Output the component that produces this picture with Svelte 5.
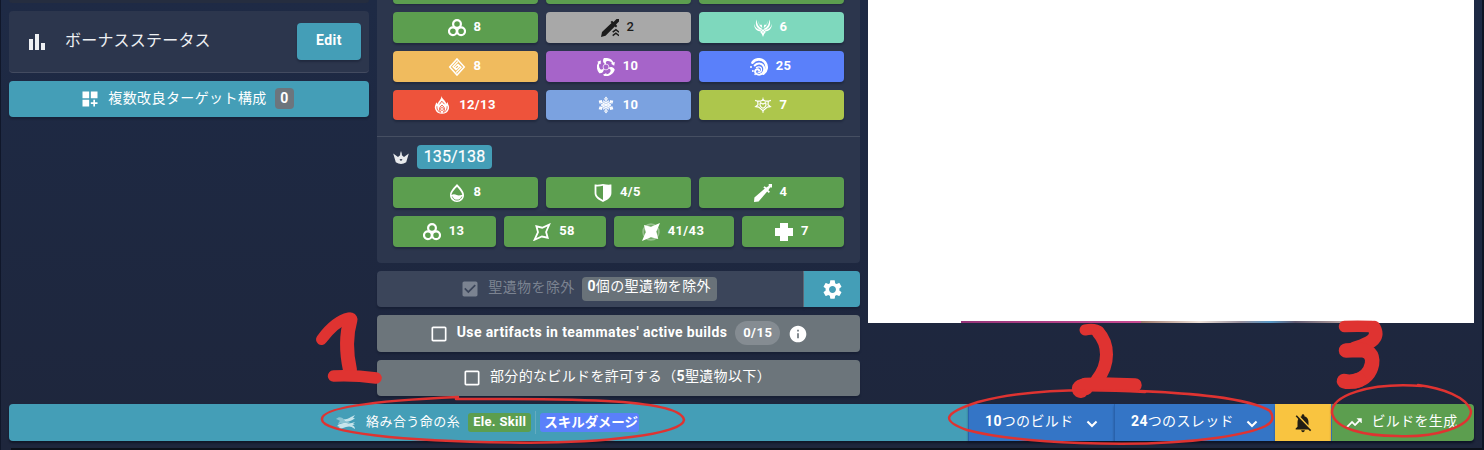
<script>
  const elements = [
    { icon: 'em', label: '8', color: '#5c9e4f' },
    { icon: 'heavy', label: '2', color: '#a8a8a8', dark: true },
    { icon: 'anemo', label: '6', color: '#7ed8bd' },
    { icon: 'geo', label: '8', color: '#f0bb5e' },
    { icon: 'electro', label: '10', color: '#a664c9' },
    { icon: 'hydro', label: '25', color: '#5a80fa' },
    { icon: 'pyro', label: '12/13', color: '#ee533b' },
    { icon: 'cryo', label: '10', color: '#7ba2e0' },
    { icon: 'dendro', label: '7', color: '#adc64c' }
  ];
  const crownTop = [
    { icon: 'hp', label: '8' },
    { icon: 'def', label: '4/5' },
    { icon: 'atk', label: '4' }
  ];
  const crownBottom = [
    { icon: 'em', label: '13' },
    { icon: 'rate', label: '58' },
    { icon: 'dmg', label: '41/43' },
    { icon: 'heal', label: '7' }
  ];
</script>

{#snippet glyph(name)}
  <svg class="glyph" viewBox="0 0 18 18" fill="currentColor">
    {#if name === 'em'}
      <g fill="none" stroke="currentColor" stroke-width="2.2">
        <circle cx="9" cy="5" r="3.9" /><circle cx="4.9" cy="12.2" r="3.9" /><circle cx="13.1" cy="12.2" r="3.9" />
      </g>
    {:else if name === 'heavy'}
      <path d="M0 18 1 13 10.5 4 9.5 3 11 1.8 12.5 3 15.5 0 18 0 18 2.5 15 5.5 16.2 7 15 8.4 13.8 7.4 4.5 16.8Z" />
      <path d="m11.7 13.2 3.2-2.5 3.2 2.5M11.7 16.7l3.2-2.5 3.2 2.5" fill="none" stroke="currentColor" stroke-width="1.5" />
    {:else if name === 'atk'}
      <path d="M0 18 .4 13.400 10.800 4.600 9.300 3.400 10.600 2.200 12.300 3.500 14.700 2 14.700 0H18V3.400L16.100 3.600 14.400 6.200 16 7.700 14.700 8.900 13.200 7.500 4.600 17.400Z" />
    {:else if name === 'anemo'}
      <path d="M2.600.5C.9 4.600 2 9.200 7.600 11.200L8 9.700C4.500 8 2.700 5 2.600.5ZM4.300 1.500C4.500 5.400 6 7.900 8.300 8.900L7.800 5.800 5.500 5.700ZM0 4.800c.1 4.900 2.800 7.600 7.200 7.800L6.700 11C3.200 10.200.9 8.600 0 4.800ZM15.400.5c1.700 4.100.6 8.700-5 10.700L10 9.700C13.500 8 15.300 5 15.400.5ZM13.700 1.500C13.500 5.400 12 7.900 9.700 8.900l.5-3.100 2.300-.1ZM18 4.800c-.1 4.900-2.800 7.600-7.200 7.800l.5-1.600C14.800 10.200 17.100 8.600 18 4.800Z" />
      <path d="m9 10 2.800 3-1.600 2L9 18l-1.200-3-1.600-2Z" /><circle cx="9" cy="12.9" r=".6" fill="#7ed8bd" />
    {:else if name === 'geo'}
      <g fill="none" stroke="currentColor">
        <path stroke-width="1.5" d="M9 .9 16.300 9 9 17.100 1.700 9Z" />
        <path stroke-width="1.3" d="M9.800 3.500 4.900 8.700 8 11.700 11.200 8.500 9.200 6.600M8.200 14.500 13.100 9.300 10 6.300 6.800 9.500 8.800 11.400" />
      </g>
    {:else if name === 'electro'}
      <g>
        {#each [0, 120, 240] as angle}
          <path transform={`rotate(${angle} 9 9)`} d="M9.300 6.500C6.200 5.500 5.100 2.800 6.900.100 11.300-.6 15 1 16.600 4.400L17.900 4 17.200 7.800 14 5.700 15.200 5C13.800 3.300 11.900 2.600 10.200 3 8.700 3.600 8.500 4.900 9.300 6.500Z" />
        {/each}
      </g>
      <circle cx="9" cy="9" r="2.900" fill="none" stroke="currentColor" stroke-width=".7" />
    {:else if name === 'hydro'}
      <g fill="none" stroke="currentColor" stroke-linecap="round">
        <path stroke-width="2.700" d="M2.500 4.700C5 .2 12 .3 15 4.300C17.800 8.200 16.900 13.500 13.400 15.600" />
        <path stroke-width="2" d="M4.700 7.500C7.300 4.700 12 5 13.600 8.300C15.200 11.400 13.600 15.800 10 16.600C6.700 17 4.700 15.200 5.200 12.900C5.800 11 8.200 10.800 9.100 12.300" />
        <path stroke-width="1.300" d="M6.500 9.600C9 8 11.900 9.200 11.500 11.900C11.500 13.600 9.900 14.700 8.100 14.200" />
      </g>
      <circle cx="1" cy="9" r="1" /><circle cx="2.900" cy="13" r="1" /><circle cx="5.100" cy="16.400" r=".8" />
    {:else if name === 'pyro'}
      <path d="M8.300 0C9.500 3.200 13 5.100 13.300 7.800L14.800 6C14.600 8.300 16.800 10.100 15.900 12.900C14.900 16.300 12.200 17.700 9 17.700S3.100 16.300 2.100 12.900C1.200 10.100 3.200 8.500 3 6.300L4.700 8C5 5.200 8.500 4 8.300 0Z" />
      <path d="M3.900 10.300c-.2 4.200 2 5.600 4 5.900C6 14.400 5.700 11.500 9 9.200c3.300 2.300 3 5.200 1.100 7 2-.3 4.200-1.700 4-5.900M6.500 8.400 8.800 5.200 11.500 8.200" fill="none" stroke="#ee533b" stroke-width=".9" />
      <circle cx="9" cy="13" r="1.5" fill="none" stroke="#ee533b" stroke-width=".7" />
    {:else if name === 'cryo'}
      <g fill="none" stroke="currentColor" stroke-width="1">
        {#each [0, 60, 120, 180, 240, 300] as angle}
          <path transform={`rotate(${angle} 9 9)`} d="M9 9V.800M7.500 2.900 9 1.300l1.500 1.600L9 4.500ZM6.300 4.800 9 7l2.700-2.200" />
        {/each}
      </g>
    {:else if name === 'dendro'}
      <g fill="none" stroke="currentColor" stroke-width="1.2">
        <path d="M9 3.800 6.700 5.200H3.700L4 8.700 1.700 10.600l3 .5L9 14.800l4.300-3.700 3-.5L14 8.700l.3-3.500h-3ZM1.100 4.400l2.600.8M16.900 4.400l-2.600.8M9 14.500v2.200" />
        <path d="M6.400 6.800c-1.200 2.800.6 4.600 2.600 5.400 2-.8 3.800-2.600 2.600-5.400L9 8.100Z" />
      </g><path d="M8 5 9 .8 10 5Z" />
    {:else if name === 'hp'}
      <path fill-rule="evenodd" d="M9 0c2.900 3.200 7 7 7 11.100C16 15.300 13 18 9 18s-7-2.700-7-6.900C2 7 6.100 3.200 9 0Zm0 2.800C7 5 3.600 8.500 3.600 11c1.600-1.100 3.700-.7 5.100.1 1.400.6 3 .6 5.600-.4C13.600 8 10.900 5 9 2.800Z" />
      <path d="M4.300 12.500c.5 2.200 2.300 3.600 4.700 3.600s4.200-1.300 4.800-3.500" fill="none" stroke="#5c9e4f" stroke-width=".8" />
    {:else if name === 'def'}
      <path fill-rule="evenodd" d="M.6.6C3.600.8 6 .7 9 0c3 .7 5.400.8 8.400.6v8.600c0 4.500-4.900 7-8.400 8.800C5.500 16.200.6 13.700.6 9.200ZM2.400 2.400v6.800c0 3 3.400 5 6.600 6.700V1.800C6.800 2.300 4.800 2.500 2.400 2.400Z" />
    {:else if name === 'rate'}
      <path d="M16.2 1.600 13.100 9l1.600 5.700L8.900 13.500 1.600 16.700 5 9.200 3.400 3.300 9.200 4.700Z" fill="none" stroke="currentColor" stroke-width="1.800" />
    {:else if name === 'dmg'}
      <circle cx="9" cy="9" r="7.800" fill="none" stroke="currentColor" stroke-width="1.900" opacity=".35" />
      <path d="M18 0 14.400 8.600l1.800 7.300-7.300-1.600L0 18 3.700 9.300 2 2.100 9 3.800Z" />
    {:else if name === 'heal'}
      <path d="M5 0h8v5h5v8h-5v5H5v-5H0V5h5Z" />
    {/if}
  </svg>
{/snippet}

{#snippet stat(item)}
  <button class="stat" class:dark={item.dark} style:background={item.color ?? '#5c9e4f'}>
    {@render glyph(item.icon)}<span>{item.label}</span>
  </button>
{/snippet}

<div class="page">
  <div class="columns">
    <aside>
      <div class="card-end"></div>
      <section class="bonus">
        <svg class="m24" viewBox="0 0 24 24"><path d="M4 9h4v11H4zm12 4h4v7h-4zm-6-9h4v16h-4z" /></svg>
        <span>ボーナスステータス</span>
        <button class="edit">Edit</button>
      </section>
      <button class="targets">
        <svg class="m20" viewBox="0 0 24 24"><path d="M3 3h8v8H3zm10 0h8v8h-8zM3 13h8v8H3zm15 0h-2v3h-3v2h3v3h2v-3h3v-2h-3z" /></svg>
        <span>複数改良ターゲット構成</span><b>0</b>
      </button>
    </aside>

    <main>
      <section class="filters">
        <div class="grid ends"><i></i><i></i><i></i></div>
        <div class="grid elements">{#each elements as item}{@render stat(item)}{/each}</div>
        <div class="crown">
          <svg viewBox="0 0 16 14"><path fill-rule="evenodd" d="M8 0 8.700 2.300 8.900 4.200 11 6 15.800 2.500 13.200 11.200Q8 14.800 2.800 11.200L.2 2.500 5 6 7.100 4.200 7.300 2.300ZM6.500 8.600 8 7.900l1.500.7L8 10Z" /></svg>
          <span>135/138</span>
        </div>
        <div class="grid top">{#each crownTop as item}{@render stat(item)}{/each}</div>
        <div class="grid bottom">{#each crownBottom as item}{@render stat(item)}{/each}</div>
      </section>
      <div class="exclude">
        <div class="disabled">
          <svg class="m20" viewBox="0 0 24 24"><path d="M19 3H5c-1.110 0-2 .9-2 2v14c0 1.100.890 2 2 2h14c1.110 0 2-.9 2-2V5c0-1.100-.890-2-2-2zm-9 14l-5-5 1.410-1.410L10 14.170l7.590-7.590L19 8l-9 9z" /></svg>
          <span class="dim">聖遺物を除外</span><span class="count"><b>0</b>個の聖遺物を除外</span>
        </div>
        <button class="settings" aria-label="Settings">
          <svg class="m24" viewBox="0 0 24 24"><path d="M19.14 12.94c.04-.3.06-.61.06-.94 0-.32-.02-.64-.07-.94l2.03-1.58c.18-.14.23-.41.12-.61l-1.92-3.32c-.12-.22-.37-.29-.59-.22l-2.39.96c-.5-.38-1.03-.7-1.62-.94l-.36-2.54c-.04-.24-.24-.41-.48-.41h-3.84c-.24 0-.43.17-.47.41l-.36 2.54c-.59.24-1.13.57-1.62.94l-2.39-.96c-.22-.08-.47 0-.59.22L2.74 8.87c-.12.21-.08.47.12.61l2.03 1.58c-.05.3-.09.63-.09.94s.02.64.07.94l-2.03 1.58c-.18.14-.23.41-.12.61l1.92 3.32c.12.22.37.29.59.22l2.39-.96c.5.38 1.03.7 1.62.94l.36 2.54c.05.24.24.41.48.41h3.84c.24 0 .44-.17.47-.41l.36-2.54c.59-.24 1.13-.56 1.62-.94l2.39.96c.22.08.47 0 .59-.22l1.92-3.32c.12-.22.07-.47-.12-.61l-2.01-1.58zM12 15.6c-1.98 0-3.6-1.62-3.6-3.6s1.62-3.6 3.6-3.6 3.6 1.62 3.6 3.6-1.62 3.6-3.6 3.6z" /></svg>
        </button>
      </div>
      <button class="option team">
        <svg class="m20" viewBox="0 0 24 24"><path d="M19 5v14H5V5h14m0-2H5c-1.100 0-2 .9-2 2v14c0 1.100.9 2 2 2h14c1.100 0 2-.9 2-2V5c0-1.100-.9-2-2-2z" /></svg>
        <strong>Use artifacts in teammates' active builds</strong><span class="pill">0/15</span>
        <svg class="m20" viewBox="0 0 24 24"><path d="M12 2C6.480 2 2 6.480 2 12s4.480 10 10 10 10-4.480 10-10S17.520 2 12 2zm1 15h-2v-6h2v6zm0-8h-2V7h2v2z" /></svg>
      </button>
      <button class="option partial">
        <svg class="m20" viewBox="0 0 24 24"><path d="M19 5v14H5V5h14m0-2H5c-1.100 0-2 .9-2 2v14c0 1.100.9 2 2 2h14c1.100 0 2-.9 2-2V5c0-1.100-.9-2-2-2z" /></svg>
        <span>部分的なビルドを許可する（<b>5</b>聖遺物以下）</span>
      </button>
    </main>

    <div class="blank"><div class="picture-edge"></div></div>
  </div>

  <footer>
    <div class="target">
      <svg class="ability" viewBox="0 0 20 15"><path opacity=".45" d="M0 4c3-3 6-2 9 1 2 1 3 2 5 2-2 2-5 2-8 1-2 0-3 1-4 2 0-2 1-3 2-4-1-1-2-1-4-2Z" /><path opacity=".85" d="M8 4c4 1 6-2 11-4l-2 3 2 0c-3 3-7 4-10 3ZM1 11c3-3 6-3 9-3 3 1 6 0 9-1l-2 2 2 1-3 0c2 1 3 2 3 4-4-3-6-3-9-2-3 1-6 2-9 2 1-1 2-1 3-2Z" /></svg>
      <span class="name">絡み合う命の糸</span><span class="tag skill">Ele. Skill</span><span class="rule"></span><span class="tag damage">スキルダメージ</span>
    </div>
    <button class="select builds"><span><b>10</b>つのビルド</span><svg class="m20" viewBox="0 0 24 24"><path d="M7.410 8.090L12 12.670l4.590-4.580L18.300 9.800l-6.300 6.300-6.300-6.300z" /></svg></button>
    <button class="select threads"><span><b>24</b>つのスレッド</span><svg class="m20" viewBox="0 0 24 24"><path d="M7.410 8.090L12 12.670l4.590-4.580L18.300 9.800l-6.300 6.300-6.300-6.300z" /></svg></button>
    <button class="bell" aria-label="Notifications"><svg class="m24" viewBox="0 0 24 24"><path d="M20 18.69L7.84 6.14 5.27 3.49 4 4.76l2.8 2.8v.01c-.52.99-.8 2.16-.8 3.42v5l-2 2v1h13.73l2 2L21 19.72l-1-1.03zM12 22c1.11 0 2-.89 2-2h-4c0 1.11.89 2 2 2zm6-7.32V11c0-3.08-1.64-5.64-4.5-6.32V4c0-.83-.67-1.5-1.5-1.5s-1.5.67-1.5 1.5v.68c-.15.03-.29.08-.42.12-.1.03-.2.07-.3.11h-.01c-.01 0-.01 0-.02.01-.23.09-.46.2-.68.31 0 0-.01 0-.01.01L18 14.68z" /></svg></button>
    <button class="generate"><svg class="m20" viewBox="0 0 24 24"><path d="M16 6l2.290 2.290-4.880 4.880-4-4L2 16.590 3.410 18l6-6 4 4 6.300-6.290L22 12V6z" stroke="currentColor" stroke-width=".6" /></svg><span>ビルドを生成</span></button>
  </footer>
  <div class="page-end"></div>

  <svg class="marks" viewBox="0 0 1484 450">
    <g fill="none" stroke="#df3331" stroke-linecap="round" stroke-linejoin="round">
      <path stroke-width="11" d="M321.500 339.500Q335 321 349 318" />
      <path stroke-width="14" d="M350.500 319.500C346 335 346 352 350 370" />
      <path stroke-width="11.500" d="M333.500 376Q354 375 376 378" />
      <path stroke-width="11" d="M1085 330Q1095 328 1099 332" />
      <path stroke-width="13" d="M1098 332C1109 344 1110 364 1097 380" />
      <path stroke-width="17" d="M1080.500 389.500Q1080 387 1085 387" /><path stroke-width="13.500" d="M1085 384.500 1102 384 1135 385" />
      <path stroke-width="11.500" d="M1344.500 326.500Q1357 326 1372 326.500" /><path stroke-width="13.500" d="M1374 327.500C1381 341 1364 345 1353 349" />
      <path stroke-width="14.500" d="M1346 350.500 1358 350Q1374 350 1372 364C1370 374 1363 379 1356 381" /><path stroke-width="14.500" d="M1344 381Q1350 383 1359 380" />
      <path stroke-width="2.500" d="M458 397C390 400 322 406 322 419C320 433 405 441 510 442.500C602 444 683 434 684 420C680 398 565 399 456 399" />
      <path stroke-width="2.500" d="M1145 392C1060 387 1007 394 978 402C941 414 942 421 967 430C1015 443 1137 449 1216 438C1268 430 1278 423 1270 411C1248 397 1185 393 1140 391" />
      <path stroke-width="2.500" d="M1422 386C1368 382 1331 396 1332 413C1335 429 1365 436 1397 436C1434 438 1471 427 1471 411C1467 397 1442 388 1418 385" />
    </g>
  </svg>
</div>

<style>
  :global(body) { background: #1e273e; }
  .page { position: relative; box-sizing: border-box; width: 1484px; height: 450px; padding-left: 8px; border-left: 1px solid #10172a; border-right: 2px solid #0d1424; background: linear-gradient(#1e2a45, #1e263c); color: #fff; font: 14px/21px Roboto, "Noto Sans CJK JP", sans-serif; overflow: hidden; }
  button { box-sizing: border-box; display: flex; align-items: center; justify-content: center; margin: 0; padding: 0; border: 0; border-radius: 4px; color: #fff; font: inherit; box-shadow: 0 2px 2px #0d132455; }
  svg { flex: none; fill: currentColor; }
  b, strong { font-weight: 700; }
  .columns { display: grid; grid-template-columns: 360px 483px 606px; gap: 8px; height: 404px; }
  .card-end { height: 3px; border-radius: 0 0 4px 4px; background: #252d3f; margin-bottom: 8px; }
  .bonus { box-sizing: border-box; height: 62px; border-bottom: 1px solid #434b60; border-radius: 4px; background: #2c364d; display: flex; align-items: center; padding: 0 8px 0 16px; margin-bottom: 8px; color: #eef0f3; }
  .bonus span { margin-left: 16px; padding-bottom: 3px; font-size: 16px; letter-spacing: .2px; white-space: nowrap; }
  .m24 { width: 24px; height: 24px; } .m20 { width: 20px; height: 20px; }
  .edit { margin-left: auto; width: 64px; height: 37px; padding-bottom: 2px; background: #449eb7; font-weight: 700; letter-spacing: .5px; }
  .targets { width: 360px; height: 36px; padding-right: 4px; background: #449eb7; }
  .targets span { margin-left: 8px; padding-bottom: 2px; letter-spacing: .4px; }
  .targets b { margin: 0 0 1px 8px; width: 19px; height: 21px; border-radius: 4px; background: #6c757d; text-align: center; line-height: 21px; }
  .filters { height: 263px; background: #2c364d; border-radius: 0 0 4px 4px; margin-bottom: 8px; }
  .grid { display: grid; grid-template-columns: repeat(3, 145px); gap: 8px; padding: 0 16px; }
  .ends i { height: 4px; border-radius: 0 0 4px 4px; background: #5c9e4f; box-shadow: 0 1px 2px #0d132455; }
  .elements { padding-top: 8px; grid-template-rows: 31px 31px 30px; height: 108px; padding-bottom: 16px; border-bottom: 1px solid #464f62; }
  .stat { gap: 8px; padding-right: 2px; font-size: 13px; font-weight: 700; letter-spacing: .4px; }
  .stat.dark { color: #1b1b1b; }
  .stat.dark span { font-weight: 500; }
  .stat span { padding-bottom: 2px; }
  .glyph { width: 18px; height: 18px; }
  .crown { height: 24px; padding: 8px 16px; display: flex; align-items: center; gap: 8px; }
  .crown svg { width: 16px; height: 14px; margin-top: 2px; color: #e8eaed; }
  .crown span { width: 75px; height: 24px; border-radius: 4px; background: #449eb7; text-align: center; font-size: 16px; line-height: 23px; letter-spacing: .15px; -webkit-text-stroke: .2px; }
  .top { grid-template-rows: 31px; margin-bottom: 8px; }
  .bottom { grid-template-columns: 103px 102px 120px 102px; grid-template-rows: 31px; }
  .exclude { display: flex; height: 36px; margin-bottom: 8px; }
  .disabled { flex: 1; display: flex; align-items: center; justify-content: center; padding-right: 3px; border-radius: 4px 0 0 4px; background: #3b455a; border-right: 1px solid #66707d; box-shadow: 0 2px 2px #0d132455; color: #7b8391; }
  .dim { margin: 0 7px 0 8px; padding-bottom: 3px; letter-spacing: .4px; }
  .count { box-sizing: border-box; width: 135px; height: 24px; margin-bottom: 1px; border-radius: 4px; background: #697279; color: #fff; text-align: center; line-height: 19px; letter-spacing: .4px; }
  .settings { width: 56px; border-radius: 0 4px 4px 0; background: #449eb7; } .settings svg { width: 23px; height: 23px; }
  .option { width: 483px; background: #6c757b; }
  .team { height: 37px; margin-bottom: 8px; } .partial { height: 36px; padding-right: 4px; }
  .team strong { margin: 0 8px 3px 8px; letter-spacing: .37px; font-size: 14px; }
  .pill { width: 45px; height: 24px; margin: 0 8px 2px 0; border-radius: 12px; background: #858c92; line-height: 23px; font-size: 13px; font-weight: 700; letter-spacing: .5px; }
  .partial span { margin-left: 8px; padding-bottom: 3px; letter-spacing: .35px; }
  .blank { box-sizing: border-box; height: 323px; padding: 321px 95px 0 93px; background: #fff; }
  .picture-edge { height: 2px; background: linear-gradient(90deg, #963579, #c84b92 43%, #9b7569 43%, #eee1d8 57%, #958d9b 67%, #5697c5 74%, #615970 80%, #b9a4a0 92%, #fff); }
  footer { display: flex; width: 1465px; height: 37px; border-radius: 4px; box-shadow: 0 2px 2px #0a1020aa; }
  footer button { border-radius: 0; }
  .target { box-sizing: border-box; width: 959px; display: flex; align-items: center; padding-left: 327px; border-radius: 4px 0 0 4px; background: #449eb7; }
  .ability { width: 20px; height: 15px; color: #ddf0f4; }
  .name { margin-left: 10px; padding-bottom: 3px; font-size: 13px; letter-spacing: .45px; white-space: nowrap; }
  .tag { height: 19px; border-radius: 3px; text-align: center; line-height: 18px; font-weight: 700; white-space: nowrap; }
  .skill { width: 63px; margin-left: 8px; background: #5c9e4f; letter-spacing: .3px; font-size: 13px; }
  .rule { width: 1px; height: 23px; margin: 0 4px; background: #64acc0; }
  .damage { box-sizing: border-box; width: 99px; padding-left: 3px; background: #5a80fa; font-size: 13.500px; }
  .select { border-left: 1px solid #2862ad; background: #3475c6; justify-content: flex-start; padding-left: 16px; }
  .select span, .generate span { padding-bottom: 3px; letter-spacing: .35px; white-space: nowrap; }
  .builds { width: 146px; } .threads { width: 161px; } .select svg { margin: 2px 0 0 8px; }
  .bell { width: 56px; color: #211d13; background: #f9c440; } .bell svg { width: 22px; height: 22px; }
  .generate { width: 143px; padding-right: 3px; border-left: 1px solid #376fae; background: #5c9e4f; } footer .generate { border-radius: 0 4px 4px 0; }
  .generate svg { width: 18px; height: 18px; margin-right: 8px; }
  .page-end { height: 2px; margin-top: 7px; margin-left: 2px; background: #0c111b; }
  .marks { position: absolute; left: -1px; top: 0; width: 1484px; height: 450px; pointer-events: none; }
</style>
